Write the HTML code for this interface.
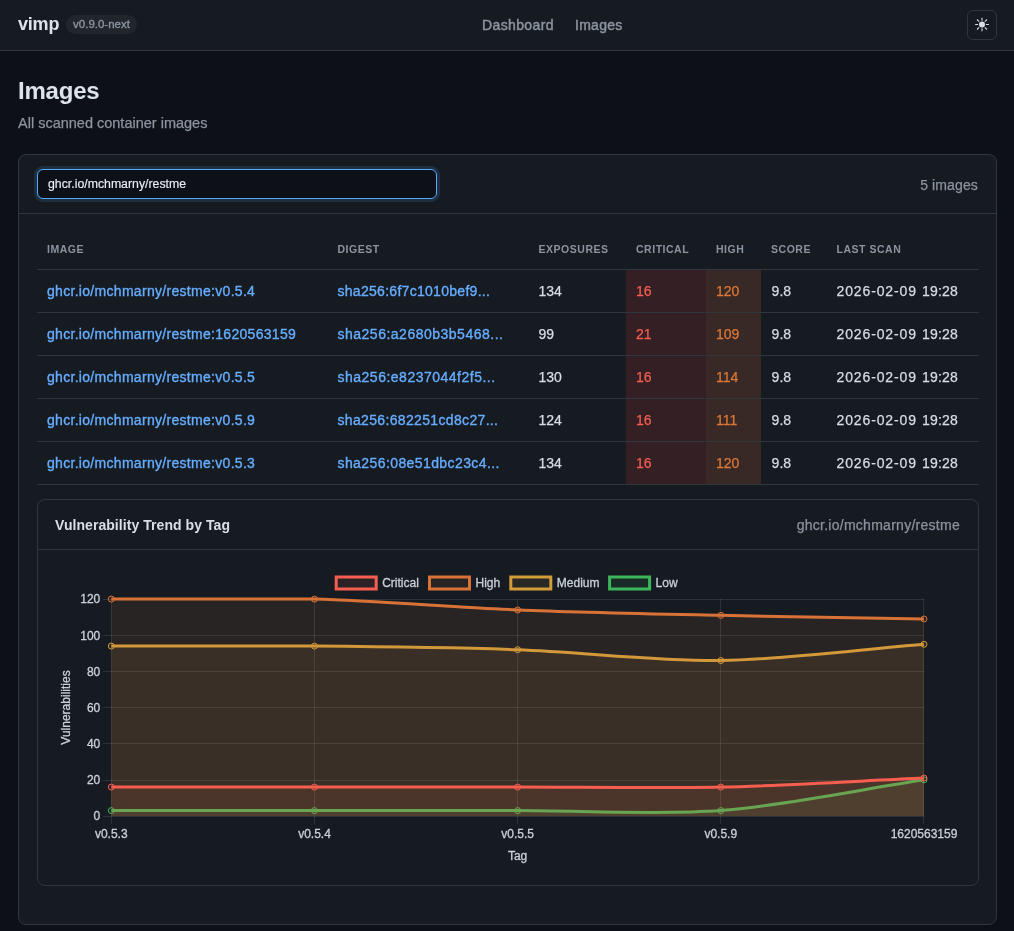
<!DOCTYPE html>
<html lang="en"><head><meta charset="utf-8"><title>vimp - Images</title>
<style>
*{box-sizing:border-box}
html,body{margin:0;padding:0}
body{width:1014px;height:931px;overflow:hidden;background:#0d1117;color:#e6edf3;-webkit-text-stroke-width:0.25px;font-family:"Liberation Sans",sans-serif;font-size:14px;position:relative}
.hdr{position:absolute;left:0;top:0;width:1014px;height:51px;background:#161b22;border-bottom:1px solid #30363d}
.brand{position:absolute;left:18px;top:13px;font-size:18px;font-weight:700;line-height:22px;color:#dde3ea;-webkit-text-stroke-width:0;letter-spacing:-0.2px}
.ver{position:absolute;left:66px;top:15px;height:19px;width:71px;border-radius:10px;background:#21262d;color:#8b949e;font-size:11.5px;line-height:19px;text-align:center;-webkit-text-stroke-width:0.35px}
.nav a{position:absolute;top:16px;font-size:14px;line-height:18px;color:#8b949e;font-weight:400;-webkit-text-stroke:0.45px #8b949e}
.tgl{position:absolute;left:967px;top:10px;width:30px;height:30px;border:1px solid #30363d;border-radius:6px;background:#161b22}
.tgl svg{position:absolute;left:0;top:0}
h1{position:absolute;left:18px;top:77px;margin:0;font-size:24px;line-height:28px;font-weight:700;color:#dde3ea;-webkit-text-stroke-width:0;letter-spacing:-0.2px}
.sub{position:absolute;left:18px;top:114px;font-size:14.5px;line-height:18px;color:#8b949e}
.card{position:absolute;left:18px;top:154px;width:979px;height:771px;background:#161b22;border:1px solid #30363d;border-radius:8px}
.chead{position:absolute;left:0;top:0;width:977px;height:59px;border-bottom:1px solid #30363d}
.inp{position:absolute;left:18px;top:14px;width:400px;height:30px;border:1px solid #58a6ff;border-radius:6px;background:#0d1117;box-shadow:0 0 0 3px rgba(88,166,255,0.15);color:#e6edf3;font-size:12.3px;line-height:28px;padding-left:10px;-webkit-text-stroke-width:0.15px}
.cnt{position:absolute;right:18px;top:21px;font-size:14px;line-height:18px;color:#8b949e;letter-spacing:0.13px}
table{position:absolute;left:18px;top:73px;width:942px;border-collapse:collapse;table-layout:fixed}
th{height:41px;padding:1px 0 0 10px;text-align:left;font-size:10.5px;font-weight:700;color:#8b949e;-webkit-text-stroke-width:0;letter-spacing:0.52px;border-bottom:1px solid #30363d;white-space:nowrap}
td{height:43px;padding:0 0 0 10px;font-size:14px;color:#d6dde4;-webkit-text-stroke-width:0.25px;border-bottom:1px solid #30363d;white-space:nowrap;overflow:hidden}
td a{color:#66adff;-webkit-text-stroke-width:0.35px;text-decoration:none}
td.crit{background:#331f24;color:#f75e50}
td.high{background:#382926;color:#dd7838}
.c-img a{letter-spacing:0.3px}
.c-dig a{letter-spacing:0.5px}
.c-date .dd{letter-spacing:0.88px}
.c-date .tt{letter-spacing:0.2px;margin-left:1.1px}
.ccard{position:absolute;left:18px;top:344px;width:942px;height:387px;border:1px solid #30363d;border-radius:8px;background:#161b22}
.cchead{position:absolute;left:0;top:0;width:940px;height:50px;border-bottom:1px solid #30363d}
.cct{position:absolute;left:17px;top:16px;font-size:14px;line-height:18px;font-weight:700;color:#d8dfe6;letter-spacing:0.06px;-webkit-text-stroke-width:0}
.ccr{position:absolute;right:18px;top:16px;font-size:14px;line-height:18px;color:#8b949e;letter-spacing:0.27px}
svg.chart{position:absolute;left:0;top:0}
svg.chart text{stroke:#c9d1d9;stroke-width:0.3px}
#wrap{position:absolute;left:0;top:0;width:1014px;height:931px;will-change:transform}
</style></head><body><div id="wrap">
<div class="hdr">
 <div class="brand">vimp</div>
 <div class="ver">v0.9.0-next</div>
 <div class="nav"><a style="left:482px;letter-spacing:0.38px">Dashboard</a><a style="left:575px;letter-spacing:0.28px">Images</a></div>
 <div class="tgl"><svg width="28" height="28" viewBox="0 0 28 28"><g transform="translate(14,13.5)" stroke="#d0d7de" stroke-width="1.1" stroke-linecap="butt"><circle r="3" fill="#d8dee4" stroke="none"/><path d="M0,-3.8V-6.7M0,3.8V6.7M-3.9,0H-6.9M3.9,0H6.9M-2.8,-2.8L-5,-5M2.8,2.8L5,5M-2.8,2.8L-5,5M2.8,-2.8L5,-5" fill="none"/></g></svg></div>
</div>
<h1>Images</h1>
<div class="sub">All scanned container images</div>
<div class="card">
 <div class="chead">
  <div class="inp">ghcr.io/mchmarny/restme</div>
  <div class="cnt">5 images</div>
 </div>
 <table>
  <colgroup><col style="width:290.5px"><col style="width:201px"><col style="width:97.5px"><col style="width:80px"><col style="width:55px"><col style="width:65.5px"><col style="width:152.5px"></colgroup>
  <thead><tr><th><span>IMAGE</span></th><th><span>DIGEST</span></th><th><span>EXPOSURES</span></th><th><span>CRITICAL</span></th><th><span>HIGH</span></th><th><span>SCORE</span></th><th><span>LAST SCAN</span></th></tr></thead>
  <tbody>
<tr><td class="c-img"><a>ghcr.io/mchmarny/restme:v0.5.4</a></td><td class="c-dig"><a style="letter-spacing:0.29px">sha256:6f7c1010bef9...</a></td><td class="c-exp">134</td><td class="crit">16</td><td class="high">120</td><td class="c-score" style="padding-left:10.6px">9.8</td><td class="c-date"><span class="dd">2026-02-09</span> <span class="tt">19:28</span></td></tr>
<tr><td class="c-img"><a>ghcr.io/mchmarny/restme:1620563159</a></td><td class="c-dig"><a style="letter-spacing:0.5px">sha256:a2680b3b5468...</a></td><td class="c-exp">99</td><td class="crit">21</td><td class="high">109</td><td class="c-score" style="padding-left:10.6px">9.8</td><td class="c-date"><span class="dd">2026-02-09</span> <span class="tt">19:28</span></td></tr>
<tr><td class="c-img"><a>ghcr.io/mchmarny/restme:v0.5.5</a></td><td class="c-dig"><a style="letter-spacing:0.5px">sha256:e8237044f2f5...</a></td><td class="c-exp">130</td><td class="crit">16</td><td class="high">114</td><td class="c-score" style="padding-left:10.6px">9.8</td><td class="c-date"><span class="dd">2026-02-09</span> <span class="tt">19:28</span></td></tr>
<tr><td class="c-img"><a>ghcr.io/mchmarny/restme:v0.5.9</a></td><td class="c-dig"><a style="letter-spacing:0.34px">sha256:682251cd8c27...</a></td><td class="c-exp">124</td><td class="crit">16</td><td class="high">111</td><td class="c-score" style="padding-left:10.6px">9.8</td><td class="c-date"><span class="dd">2026-02-09</span> <span class="tt">19:28</span></td></tr>
<tr><td class="c-img"><a>ghcr.io/mchmarny/restme:v0.5.3</a></td><td class="c-dig"><a style="letter-spacing:0.41px">sha256:08e51dbc23c4...</a></td><td class="c-exp">134</td><td class="crit">16</td><td class="high">120</td><td class="c-score" style="padding-left:10.6px">9.8</td><td class="c-date"><span class="dd">2026-02-09</span> <span class="tt">19:28</span></td></tr>
  </tbody>
 </table>
 <div class="ccard">
  <div class="cchead"><div class="cct">Vulnerability Trend by Tag</div><div class="ccr">ghcr.io/mchmarny/restme</div></div>
 </div>
</div>
<svg class="chart" width="1014" height="931" viewBox="0 0 1014 931" font-family="Liberation Sans, sans-serif" font-size="12" stroke="#c9d1d9" stroke-width="0">
<line x1="103" y1="816.5" x2="924" y2="816.5" stroke="rgba(255,255,255,0.1)" stroke-width="1"/>
<line x1="103" y1="780.5" x2="924" y2="780.5" stroke="rgba(255,255,255,0.1)" stroke-width="1"/>
<line x1="103" y1="743.5" x2="924" y2="743.5" stroke="rgba(255,255,255,0.1)" stroke-width="1"/>
<line x1="103" y1="707.5" x2="924" y2="707.5" stroke="rgba(255,255,255,0.1)" stroke-width="1"/>
<line x1="103" y1="671.5" x2="924" y2="671.5" stroke="rgba(255,255,255,0.1)" stroke-width="1"/>
<line x1="103" y1="635.5" x2="924" y2="635.5" stroke="rgba(255,255,255,0.1)" stroke-width="1"/>
<line x1="103" y1="599.5" x2="924" y2="599.5" stroke="rgba(255,255,255,0.1)" stroke-width="1"/>
<line x1="111.5" y1="599" x2="111.5" y2="824" stroke="rgba(255,255,255,0.1)" stroke-width="1"/>
<line x1="314.5" y1="599" x2="314.5" y2="824" stroke="rgba(255,255,255,0.1)" stroke-width="1"/>
<line x1="517.5" y1="599" x2="517.5" y2="824" stroke="rgba(255,255,255,0.1)" stroke-width="1"/>
<line x1="720.5" y1="599" x2="720.5" y2="824" stroke="rgba(255,255,255,0.1)" stroke-width="1"/>
<line x1="923.5" y1="599" x2="923.5" y2="824" stroke="rgba(255,255,255,0.1)" stroke-width="1"/>
<path d="M111.30,810.58 C172.25,810.58 253.52,810.58 314.48,810.58 C375.43,810.58 456.70,810.58 517.65,810.58 C578.60,810.58 660.22,815.16 720.83,810.58 C782.12,805.94 863.05,789.07 924.00,779.85 L924.00,816.00 L111.30,816.00 Z" fill="rgba(60,182,90,0.1)"/>
<path d="M111.30,810.58 C172.25,810.58 253.52,810.58 314.48,810.58 C375.43,810.58 456.70,810.58 517.65,810.58 C578.60,810.58 660.22,815.16 720.83,810.58 C782.12,805.94 863.05,789.07 924.00,779.85" fill="none" stroke="#3cb65a" stroke-width="3" stroke-linejoin="round"/>
<circle cx="111.30" cy="810.58" r="3" fill="rgba(60,182,90,0.1)" stroke="#3cb65a" stroke-width="1"/>
<circle cx="314.48" cy="810.58" r="3" fill="rgba(60,182,90,0.1)" stroke="#3cb65a" stroke-width="1"/>
<circle cx="517.65" cy="810.58" r="3" fill="rgba(60,182,90,0.1)" stroke="#3cb65a" stroke-width="1"/>
<circle cx="720.83" cy="810.58" r="3" fill="rgba(60,182,90,0.1)" stroke="#3cb65a" stroke-width="1"/>
<circle cx="924.00" cy="779.85" r="3" fill="rgba(60,182,90,0.1)" stroke="#3cb65a" stroke-width="1"/>
<path d="M111.30,646.10 C172.25,646.10 253.53,645.55 314.48,646.10 C375.43,646.64 456.74,647.54 517.65,649.71 C578.64,651.88 659.93,661.37 720.83,660.56 C781.83,659.74 863.05,649.17 924.00,644.29 L924.00,816.00 L111.30,816.00 Z" fill="rgba(210,156,57,0.1)"/>
<path d="M111.30,646.10 C172.25,646.10 253.53,645.55 314.48,646.10 C375.43,646.64 456.74,647.54 517.65,649.71 C578.64,651.88 659.93,661.37 720.83,660.56 C781.83,659.74 863.05,649.17 924.00,644.29" fill="none" stroke="#d29c39" stroke-width="3" stroke-linejoin="round"/>
<circle cx="111.30" cy="646.10" r="3" fill="rgba(210,156,57,0.1)" stroke="#d29c39" stroke-width="1"/>
<circle cx="314.48" cy="646.10" r="3" fill="rgba(210,156,57,0.1)" stroke="#d29c39" stroke-width="1"/>
<circle cx="517.65" cy="649.71" r="3" fill="rgba(210,156,57,0.1)" stroke="#d29c39" stroke-width="1"/>
<circle cx="720.83" cy="660.56" r="3" fill="rgba(210,156,57,0.1)" stroke="#d29c39" stroke-width="1"/>
<circle cx="924.00" cy="644.29" r="3" fill="rgba(210,156,57,0.1)" stroke="#d29c39" stroke-width="1"/>
<path d="M111.30,599.10 C172.25,599.10 253.57,599.10 314.48,599.10 C375.47,600.73 456.66,607.50 517.65,609.95 C578.57,612.38 659.87,614.01 720.83,615.37 C781.77,616.72 863.05,617.90 924.00,618.98 L924.00,816.00 L111.30,816.00 Z" fill="rgba(217,114,55,0.1)"/>
<path d="M111.30,599.10 C172.25,599.10 253.57,599.10 314.48,599.10 C375.47,600.73 456.66,607.50 517.65,609.95 C578.57,612.38 659.87,614.01 720.83,615.37 C781.77,616.72 863.05,617.90 924.00,618.98" fill="none" stroke="#d97237" stroke-width="3" stroke-linejoin="round"/>
<circle cx="111.30" cy="599.10" r="3" fill="rgba(217,114,55,0.1)" stroke="#d97237" stroke-width="1"/>
<circle cx="314.48" cy="599.10" r="3" fill="rgba(217,114,55,0.1)" stroke="#d97237" stroke-width="1"/>
<circle cx="517.65" cy="609.95" r="3" fill="rgba(217,114,55,0.1)" stroke="#d97237" stroke-width="1"/>
<circle cx="720.83" cy="615.37" r="3" fill="rgba(217,114,55,0.1)" stroke="#d97237" stroke-width="1"/>
<circle cx="924.00" cy="618.98" r="3" fill="rgba(217,114,55,0.1)" stroke="#d97237" stroke-width="1"/>
<path d="M111.30,787.08 C172.25,787.08 253.52,787.08 314.48,787.08 C375.43,787.08 456.70,787.08 517.65,787.08 C578.60,787.08 659.90,788.43 720.83,787.08 C781.81,785.72 863.05,780.75 924.00,778.04 L924.00,816.00 L111.30,816.00 Z" fill="rgba(247,94,80,0.1)"/>
<path d="M111.30,787.08 C172.25,787.08 253.52,787.08 314.48,787.08 C375.43,787.08 456.70,787.08 517.65,787.08 C578.60,787.08 659.90,788.43 720.83,787.08 C781.81,785.72 863.05,780.75 924.00,778.04" fill="none" stroke="#f75e50" stroke-width="3" stroke-linejoin="round"/>
<circle cx="111.30" cy="787.08" r="3" fill="rgba(247,94,80,0.1)" stroke="#f75e50" stroke-width="1"/>
<circle cx="314.48" cy="787.08" r="3" fill="rgba(247,94,80,0.1)" stroke="#f75e50" stroke-width="1"/>
<circle cx="517.65" cy="787.08" r="3" fill="rgba(247,94,80,0.1)" stroke="#f75e50" stroke-width="1"/>
<circle cx="720.83" cy="787.08" r="3" fill="rgba(247,94,80,0.1)" stroke="#f75e50" stroke-width="1"/>
<circle cx="924.00" cy="778.04" r="3" fill="rgba(247,94,80,0.1)" stroke="#f75e50" stroke-width="1"/>
<text x="100.3" y="820.3" text-anchor="end" fill="#c9d1d9">0</text>
<text x="100.3" y="784.1" text-anchor="end" fill="#c9d1d9">20</text>
<text x="100.3" y="748.0" text-anchor="end" fill="#c9d1d9">40</text>
<text x="100.3" y="711.8" text-anchor="end" fill="#c9d1d9">60</text>
<text x="100.3" y="675.7" text-anchor="end" fill="#c9d1d9">80</text>
<text x="100.3" y="639.5" text-anchor="end" fill="#c9d1d9">100</text>
<text x="100.3" y="603.4" text-anchor="end" fill="#c9d1d9">120</text>
<text x="111.3" y="838.2" text-anchor="middle" fill="#c9d1d9">v0.5.3</text>
<text x="314.5" y="838.2" text-anchor="middle" fill="#c9d1d9">v0.5.4</text>
<text x="517.6" y="838.2" text-anchor="middle" fill="#c9d1d9">v0.5.5</text>
<text x="720.8" y="838.2" text-anchor="middle" fill="#c9d1d9">v0.5.9</text>
<text x="924.0" y="838.2" text-anchor="middle" fill="#c9d1d9">1620563159</text>
<text x="517.6" y="860" text-anchor="middle" fill="#c9d1d9">Tag</text>
<text transform="translate(70,707.5) rotate(-90)" text-anchor="middle" fill="#c9d1d9">Vulnerabilities</text>
<rect x="336.2" y="577" width="40" height="12" fill="rgba(247,94,80,0.1)" stroke="#f75e50" stroke-width="3"/>
<text x="382.2" y="587.3" fill="#c9d1d9">Critical</text>
<rect x="429.5" y="577" width="40" height="12" fill="rgba(217,114,55,0.1)" stroke="#d97237" stroke-width="3"/>
<text x="475.5" y="587.3" fill="#c9d1d9">High</text>
<rect x="510.8" y="577" width="40" height="12" fill="rgba(210,156,57,0.1)" stroke="#d29c39" stroke-width="3"/>
<text x="556.8" y="587.3" fill="#c9d1d9">Medium</text>
<rect x="609.6" y="577" width="40" height="12" fill="rgba(60,182,90,0.1)" stroke="#3cb65a" stroke-width="3"/>
<text x="655.6" y="587.3" fill="#c9d1d9">Low</text>
</svg>
</div></body></html>
